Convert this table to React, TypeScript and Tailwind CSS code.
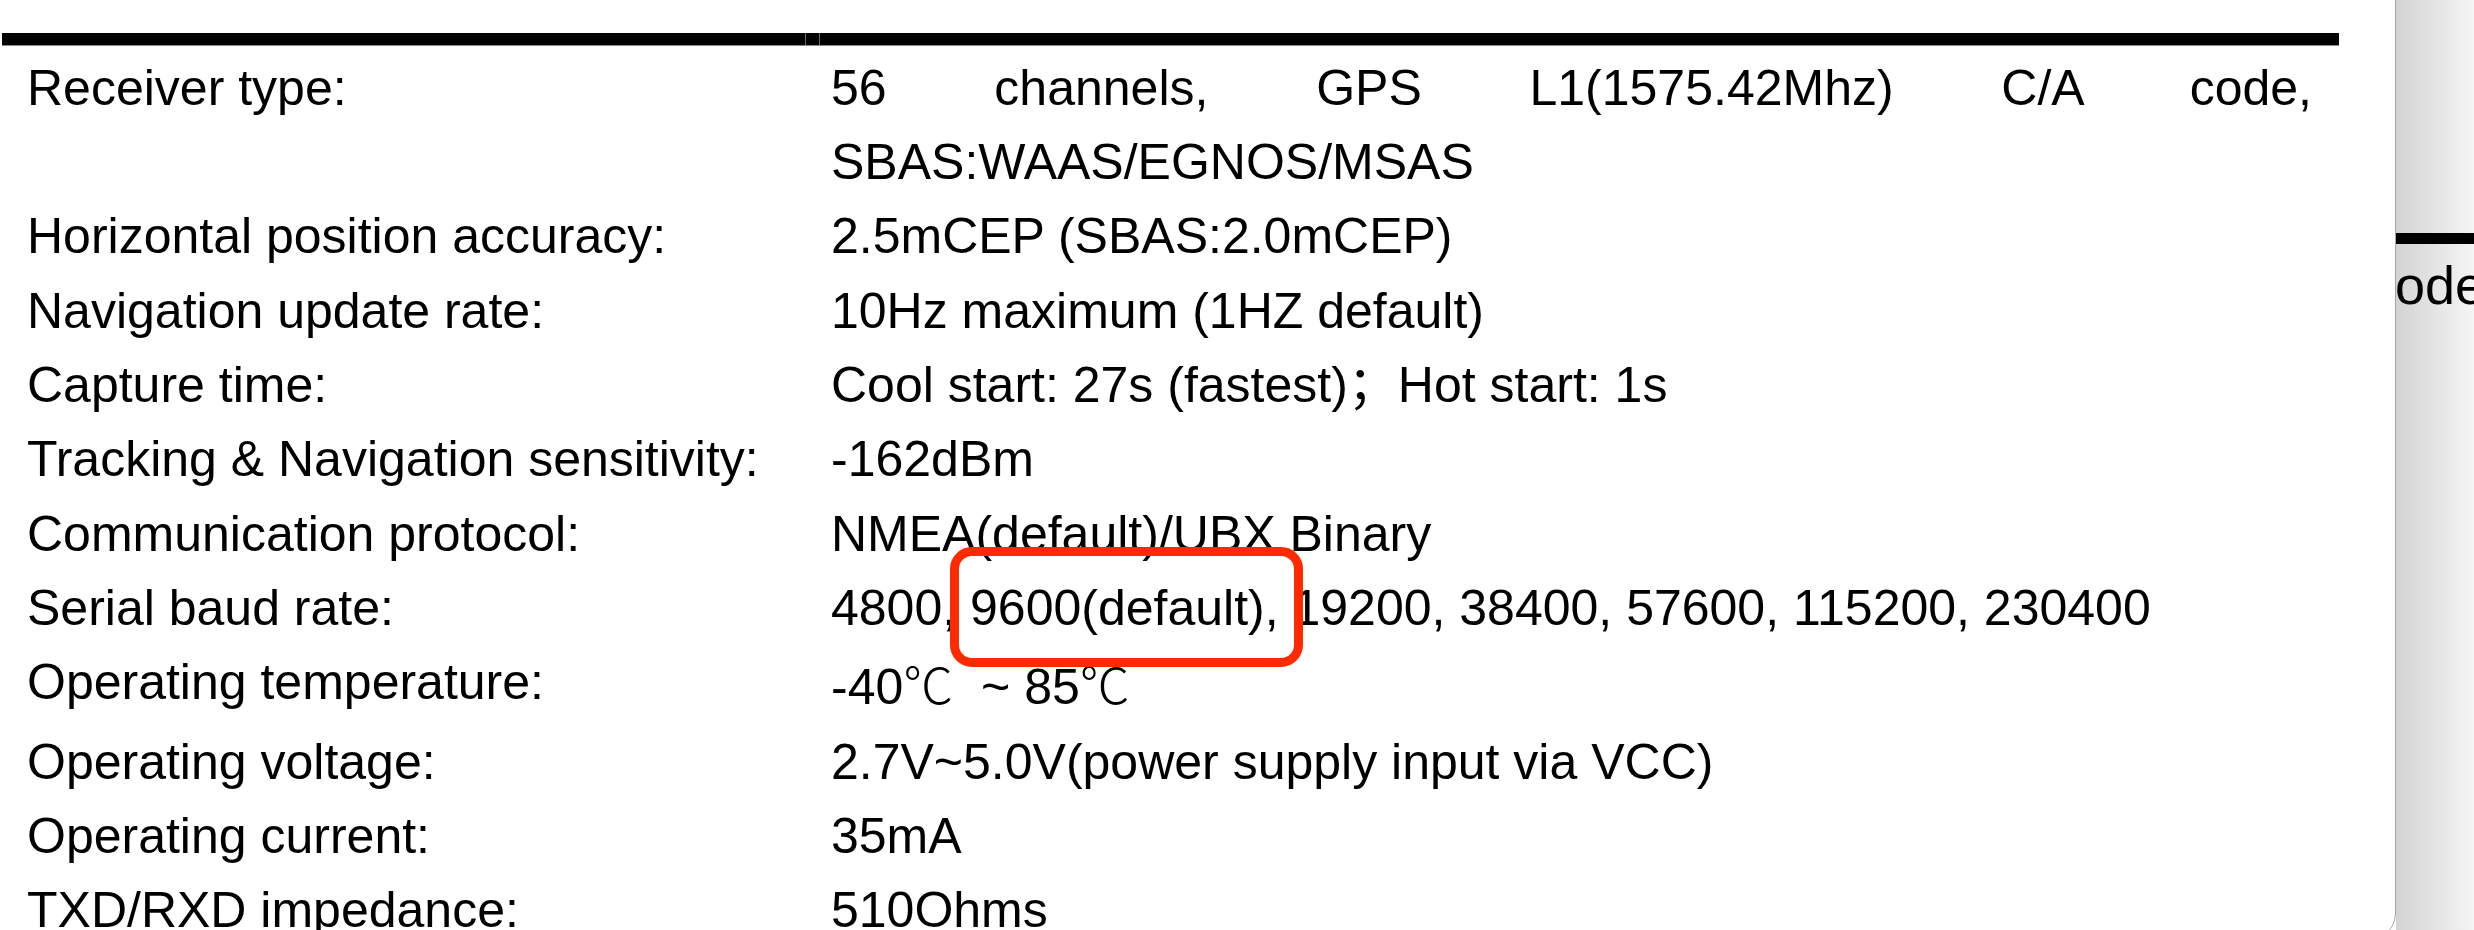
import React from "react";

const rows: { label: string; value: React.ReactNode; justify?: boolean }[] = [
  {
    label: "Receiver type:",
    value: "56 channels, GPS L1(1575.42Mhz) C/A code, SBAS:WAAS/EGNOS/MSAS",
    justify: true,
  },
  { label: "Horizontal position accuracy:", value: "2.5mCEP (SBAS:2.0mCEP)" },
  { label: "Navigation update rate:", value: "10Hz maximum (1HZ default)" },
  { label: "Capture time:", value: "Cool start: 27s (fastest)；Hot start: 1s" },
  { label: "Tracking & Navigation sensitivity:", value: "-162dBm" },
  { label: "Communication protocol:", value: "NMEA(default)/UBX Binary" },
  {
    label: "Serial baud rate:",
    value: (
      <>
        4800,{" "}
        <span className="relative">
          9600(default),
          <span className="pointer-events-none absolute -top-[33px] -bottom-[31px] -left-[20px] -right-[24px] rounded-[22px] border-[9px] border-[#ff2a00]" />
        </span>{" "}
        19200, 38400, 57600, 115200, 230400
      </>
    ),
  },
  {
    label: "Operating temperature:",
    value: (
      <span className="whitespace-pre">
        -40<span className="font-['Noto_Sans_CJK_SC',sans-serif] font-light">℃</span>
        {"  ~ 85"}
        <span className="font-['Noto_Sans_CJK_SC',sans-serif] font-light">℃</span>
      </span>
    ),
  },
  { label: "Operating voltage:", value: "2.7V~5.0V(power supply input via VCC)" },
  { label: "Operating current:", value: "35mA" },
  { label: "TXD/RXD impedance:", value: "510Ohms" },
];

export default function App() {
  return (
    <div className="flex h-[930px] w-[2474px] overflow-hidden bg-white font-['Liberation_Sans','Noto_Sans_CJK_SC',sans-serif] text-black">
      <div className="h-[940px] w-[2396px] shrink-0 rounded-br-[27px] border-r border-[#a3a3a3] bg-white pl-[2px] pt-[33px]">
        <div className="flex h-[13px] w-[2337px] border-b border-[#8a8a8a]">
          <div className="w-[803px] bg-black" />
          <div className="w-[1px] bg-[#6b6b6b]" />
          <div className="w-[13px] bg-black" />
          <div className="w-[1px] bg-[#6b6b6b]" />
          <div className="flex-1 bg-black" />
        </div>
        <div className="grid w-[2337px] grid-cols-[810px_1527px] pt-[4.5px] text-[50px] leading-[74.36px]">
          {rows.map((r) => (
            <React.Fragment key={r.label}>
              <div className="pl-[25px]">{r.label}</div>
              <div className={"pl-[19px] pr-[27px] " + (r.justify ? "text-justify" : "")}>{r.value}</div>
            </React.Fragment>
          ))}
        </div>
      </div>
      <div className="relative flex-1 overflow-hidden bg-gradient-to-r from-[#d3d3d3] to-[#f5f5f5]">
        <div className="absolute left-0 right-0 top-[233px] h-[11px] bg-black" />
        <div className="absolute left-[-28px] top-[258px] whitespace-nowrap text-[54px] leading-[54px]">code,</div>
      </div>
    </div>
  );
}
